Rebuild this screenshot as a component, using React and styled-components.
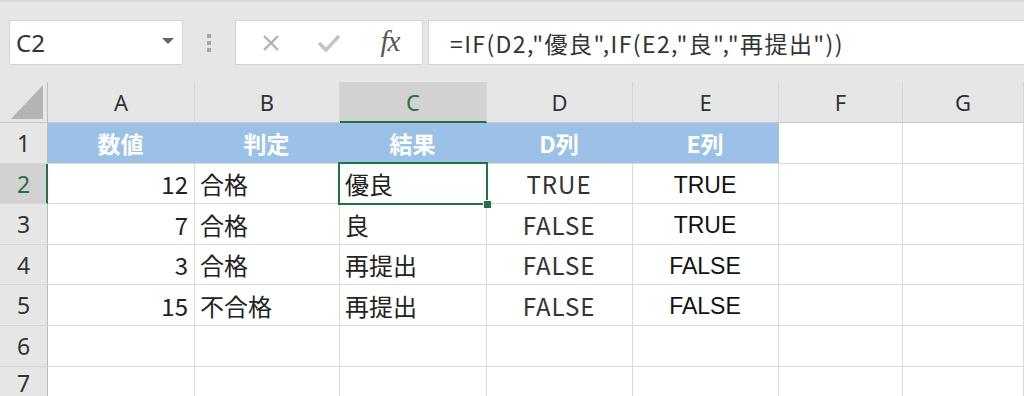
import React from "react";
import styled, { createGlobalStyle, css } from "styled-components";

const Global = createGlobalStyle`
  html, body { margin: 0; padding: 0; background: #ffffff; overflow: hidden; }
  body { width: 1024px; height: 396px; font-family: "Noto Sans", "Noto Sans CJK JP", sans-serif; }
`;

const GREEN = "#217346";
const JP = `"Noto Sans CJK JP", "Noto Sans", sans-serif`;

const Page = styled.div`
  width: 1024px;
  height: 396px;
  overflow: hidden;
  display: flex;
  flex-direction: column;
  background: #e6e6e6;
`;

const Toolbar = styled.div`
  height: 82px;
  box-sizing: border-box;
  border-top: 2px solid #d9d9d9;
  padding: 18px 0 17px 9px;
  display: flex;
  align-items: stretch;
  flex-shrink: 0;
`;

const NameBox = styled.div`
  width: 174px;
  box-sizing: border-box;
  background: #fff;
  border: 1px solid #d4d4d4;
  display: flex;
  align-items: center;
  justify-content: space-between;
  padding: 0 8px 0 6px;
  font-family: "Noto Sans", sans-serif;
  font-size: 24px;
  color: #333;
`;

const Caret = styled.span`
  width: 0;
  height: 0;
  border-left: 6px solid transparent;
  border-right: 6px solid transparent;
  border-top: 6px solid #666;
  margin-top: -4px;
`;

const Grip = styled.div`
  width: 52px;
  display: flex;
  flex-direction: column;
  align-items: center;
  justify-content: center;
  gap: 3px;
  & > span {
    width: 4px;
    height: 4px;
    background: #a6a6a6;
  }
`;

const ButtonGroup = styled.div`
  width: 188px;
  box-sizing: border-box;
  background: #fff;
  border: 1px solid #d4d4d4;
  display: flex;
  align-items: center;
  justify-content: space-around;
  padding: 0 6px;
`;

const IconSlot = styled.span`
  width: 40px;
  display: flex;
  align-items: center;
  justify-content: center;
`;

const Fx = styled.span`
  font-family: "Liberation Serif", "DejaVu Serif", serif;
  font-style: italic;
  font-size: 29px;
  color: #555;
  letter-spacing: -1px;
  margin: -3px 0 0 6px;
`;

const FormulaBox = styled.div`
  flex: 1;
  margin-left: 5px;
  background: #fff;
  border: 1px solid #d4d4d4;
  border-right: none;
  display: flex;
  align-items: center;
  padding-left: 21px;
  font-family: ${JP};
  font-size: 23px;
  letter-spacing: 1.4px;
  color: #333;
  white-space: nowrap;
`;

const Sheet = styled.div`
  flex: 1;
  display: grid;
  grid-template-columns: 48px 147px 145px 147px 146px 146px 124px 1fr;
  grid-template-rows: 41px 41px 40px 41px 40px 41px 41px 1fr;
  background: #fff;
`;

const Corner = styled.div`
  background: #e6e6e6;
  border-right: 1px solid #bdbdbd;
  border-bottom: 1px solid #c6c6c6;
  box-sizing: border-box;
  position: relative;
  &::after {
    content: "";
    position: absolute;
    right: 4px;
    bottom: 3px;
    width: 0;
    height: 0;
    border-left: 32px solid transparent;
    border-bottom: 34px solid #b4b4b4;
  }
`;

const ColHeader = styled.div`
  box-sizing: border-box;
  background: ${(p) => (p.$selected ? "#d2d2d2" : "#e6e6e6")};
  border-right: 1px solid #d6d6d6;
  border-bottom: ${(p) => (p.$selected ? `2px solid ${GREEN}` : "1px solid #c6c6c6")};
  display: flex;
  align-items: center;
  justify-content: center;
  font-family: "Noto Sans", sans-serif;
  font-size: 22px;
  color: ${(p) => (p.$selected ? GREEN : "#333")};
  padding-top: ${(p) => (p.$selected ? "1px" : "0")};
`;

const RowHeader = styled.div`
  box-sizing: border-box;
  background: ${(p) => (p.$selected ? "#d2d2d2" : "#e6e6e6")};
  border-right: ${(p) => (p.$selected ? `2px solid ${GREEN}` : "1px solid #bdbdbd")};
  border-bottom: 1px solid #d6d6d6;
  display: flex;
  align-items: center;
  justify-content: center;
  font-family: "Noto Sans", sans-serif;
  font-size: 23px;
  color: ${(p) => (p.$selected ? GREEN : "#333")};
  padding-left: ${(p) => (p.$selected ? "1px" : "0")};
`;

const Cell = styled.div`
  box-sizing: border-box;
  position: relative;
  border-right: 1px solid #dadada;
  border-bottom: 1px solid #dadada;
  display: flex;
  align-items: center;
  white-space: nowrap;
  font-family: ${JP};
  font-size: 24px;
  color: #222;
  justify-content: ${(p) =>
    p.$align === "right" ? "flex-end" : p.$align === "center" ? "center" : "flex-start"};
  padding: 0 6px 0 5px;
  ${(p) =>
    p.$head &&
    css`
      background: #9bc2e6;
      border-right-color: #9bc2e6;
      color: #fff;
      font-weight: 700;
      font-size: 23px;
    `}
  ${(p) =>
    p.$latin &&
    css`
      font-family: "Liberation Sans", Arial, sans-serif;
      font-size: 23px;
      color: #111;
      padding-top: 3px;
    `}
  ${(p) =>
    p.$wide &&
    css`
      letter-spacing: 1px;
      color: #333;
    `}
  ${(p) =>
    p.$active &&
    css`
      z-index: 2;
    `}
`;

const Selection = styled.div`
  position: absolute;
  left: -2px;
  top: -2px;
  right: -2px;
  bottom: -2px;
  border: 2px solid ${GREEN};
  pointer-events: none;
  &::after {
    content: "";
    position: absolute;
    right: -5px;
    bottom: -5px;
    width: 7px;
    height: 7px;
    background: ${GREEN};
    border-left: 1px solid #fff;
    border-top: 1px solid #fff;
  }
`;

const cols = ["A", "B", "C", "D", "E", "F", "G"];

const rows = [
  ["12", "合格", "優良", "TRUE", "TRUE"],
  ["7", "合格", "良", "FALSE", "TRUE"],
  ["3", "合格", "再提出", "FALSE", "FALSE"],
  ["15", "不合格", "再提出", "FALSE", "FALSE"],
];

const XIcon = () => (
  <svg width="20" height="20" viewBox="0 0 20 20">
    <path d="M3 3 L17 17 M17 3 L3 17" stroke="#b3b3b3" strokeWidth="2.4" fill="none" />
  </svg>
);

const CheckIcon = () => (
  <svg width="24" height="20" viewBox="0 0 24 20">
    <path d="M2 10 L9 17 L22 3" stroke="#c4c4c4" strokeWidth="3.6" fill="none" />
  </svg>
);

export default function App() {
  return (
    <Page>
      <Global />
      <Toolbar>
        <NameBox>
          <span>C2</span>
          <Caret />
        </NameBox>
        <Grip>
          <span />
          <span />
          <span />
        </Grip>
        <ButtonGroup>
          <IconSlot>
            <XIcon />
          </IconSlot>
          <IconSlot>
            <CheckIcon />
          </IconSlot>
          <IconSlot>
            <Fx>fx</Fx>
          </IconSlot>
        </ButtonGroup>
        <FormulaBox>=IF(D2,"優良",IF(E2,"良","再提出"))</FormulaBox>
      </Toolbar>
      <Sheet>
        <Corner />
        {cols.map((c) => (
          <ColHeader key={c} $selected={c === "C"}>
            {c}
          </ColHeader>
        ))}

        <RowHeader>1</RowHeader>
        <Cell $head $align="center">数値</Cell>
        <Cell $head $align="center">判定</Cell>
        <Cell $head $align="center">結果</Cell>
        <Cell $head $align="center">D列</Cell>
        <Cell $head $align="center">E列</Cell>
        <Cell />
        <Cell />

        {rows.map((r, i) => (
          <React.Fragment key={i}>
            <RowHeader $selected={i === 0}>{i + 2}</RowHeader>
            <Cell $align="right">{r[0]}</Cell>
            <Cell>{r[1]}</Cell>
            <Cell $active={i === 0}>
              {r[2]}
              {i === 0 && <Selection />}
            </Cell>
            <Cell $align="center" $wide>{r[3]}</Cell>
            <Cell $align="center" $latin>{r[4]}</Cell>
            <Cell />
            <Cell />
          </React.Fragment>
        ))}

        {[6, 7].map((n) => (
          <React.Fragment key={n}>
            <RowHeader>{n}</RowHeader>
            {cols.map((c) => (
              <Cell key={c} />
            ))}
          </React.Fragment>
        ))}
      </Sheet>
    </Page>
  );
}
